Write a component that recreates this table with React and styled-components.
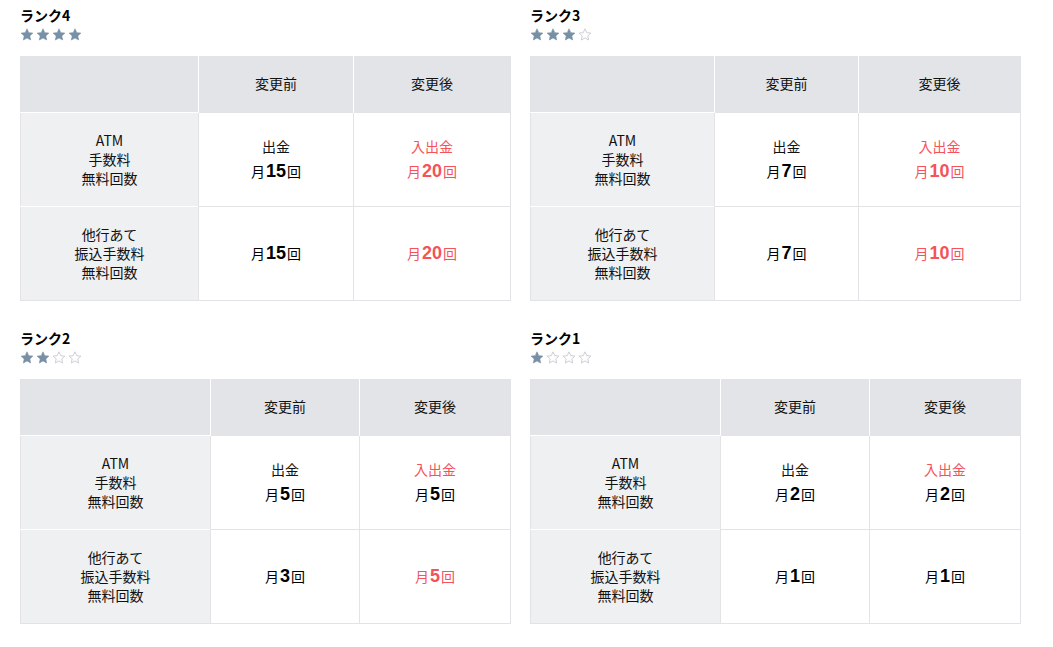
import React from 'react'
import styled, { createGlobalStyle } from 'styled-components'

const GlobalStyle = createGlobalStyle`
body{
    margin: 0;
    background: #fff;
    font-family: "Noto Sans CJK JP", "Noto Sans", sans-serif;
    color: #111;
}
`

const ranks = [
    { rank: 4, cols: [178, 155, 157], atm: ['15', '20'], atmRed: true, transfer: ['15', '20'], transferRed: true },
    { rank: 3, cols: [184, 144, 162], atm: ['7', '10'], atmRed: true, transfer: ['7', '10'], transferRed: true },
    { rank: 2, cols: [190, 149, 151], atm: ['5', '5'], atmRed: false, transfer: ['3', '5'], transferRed: true },
    { rank: 1, cols: [190, 149, 151], atm: ['2', '2'], atmRed: false, transfer: ['1', '1'], transferRed: false },
]

const STAR = 'M7 0.8 L8.75 4.65 L12.9 5.1 L9.8 7.9 L10.65 12 L7 9.9 L3.35 12 L4.2 7.9 L1.1 5.1 L5.25 4.65 Z'

const Star = ({ on }) => (
    <StarSvg viewBox="0 0 14 13" width="14" height="13">
        <path d={STAR}
            fill={on ? '#7890a5' : 'none'}
            stroke={on ? '#7890a5' : '#c6cad3'}
            strokeWidth={on ? 0.6 : 0.9}
            strokeLinejoin="round" />
    </StarSvg>
)

const Count = ({ n, red }) => (
    <CountLine red={red}>月<b>{n}</b>回</CountLine>
)

const RankBlock = ({ data }) => {
    return (
        <Block>
            <Title>ランク{data.rank}</Title>
            <Stars>
                {[1, 2, 3, 4].map((i) => <Star key={i} on={i <= data.rank} />)}
            </Stars>
            <Table>
                <colgroup>
                    {data.cols.map((w, i) => <col key={i} style={{ width: w }} />)}
                </colgroup>
                <thead>
                    <tr>
                        <HeadCell></HeadCell>
                        <HeadCell>変更前</HeadCell>
                        <HeadCell>変更後</HeadCell>
                    </tr>
                </thead>
                <tbody>
                    <tr>
                        <LabelCell>ATM<br />手数料<br />無料回数</LabelCell>
                        <ValueCell>
                            <Kind>出金</Kind>
                            <Count n={data.atm[0]} />
                        </ValueCell>
                        <ValueCell>
                            <Kind red>入出金</Kind>
                            <Count n={data.atm[1]} red={data.atmRed} />
                        </ValueCell>
                    </tr>
                    <tr>
                        <LabelCell>他行あて<br />振込手数料<br />無料回数</LabelCell>
                        <ValueCell>
                            <Count n={data.transfer[0]} />
                        </ValueCell>
                        <ValueCell>
                            <Count n={data.transfer[1]} red={data.transferRed} />
                        </ValueCell>
                    </tr>
                </tbody>
            </Table>
        </Block>
    )
}

const App = () => {
    return (
        <Page>
            <GlobalStyle />
            {ranks.map((r) => <RankBlock key={r.rank} data={r} />)}
        </Page>
    )
}

const Page = styled.div`
padding: 5px 33px 20px 20px;
display: grid;
grid-template-columns: 490px 490px;
column-gap: 20px;
row-gap: 27px;
`
const Block = styled.section`
display: flex;
flex-direction: column;
`
const Title = styled.h3`
margin: 0;
font-size: 14px;
line-height: 20px;
font-weight: bold;
color: #000;
`
const Stars = styled.div`
display: flex;
gap: 2px;
height: 18px;
margin-bottom: 13px;
align-items: center;
`
const StarSvg = styled.svg`
display: block;
`
const Table = styled.table`
width: 489px;
table-layout: fixed;
border-collapse: collapse;
border: 1px solid #e2e3e6;
font-size: 14px;
`
const HeadCell = styled.th`
height: 52px;
padding: 0 0 3px;
background: #e3e4e8;
font-weight: normal;
font-size: 14px;
color: #111;
border-left: 1px solid #fff;
&:first-child{
    border-left: none;
}
`
const LabelCell = styled.td`
height: 93px;
padding: 0;
background: #eff0f2;
text-align: center;
line-height: 19px;
color: #111;
border-top: 1px solid #fff;
`
const ValueCell = styled.td`
padding: 0 0 2px;
text-align: center;
background: #fff;
border-top: 1px solid #e3e3e6;
border-left: 1px solid #e3e3e6;
`
const Kind = styled.div`
font-size: 14px;
line-height: 20px;
margin-bottom: 4px;
color: ${props => props.red ? '#f5525a' : '#111'};
`
const CountLine = styled.div`
font-size: 14px;
line-height: 22px;
color: ${props => props.red ? '#f5525a' : '#000'};
b{
    font-family: "Liberation Sans", Arial, sans-serif;
    font-size: 18px;
    font-weight: bold;
    margin: 0 1px;
}
`

export default App
